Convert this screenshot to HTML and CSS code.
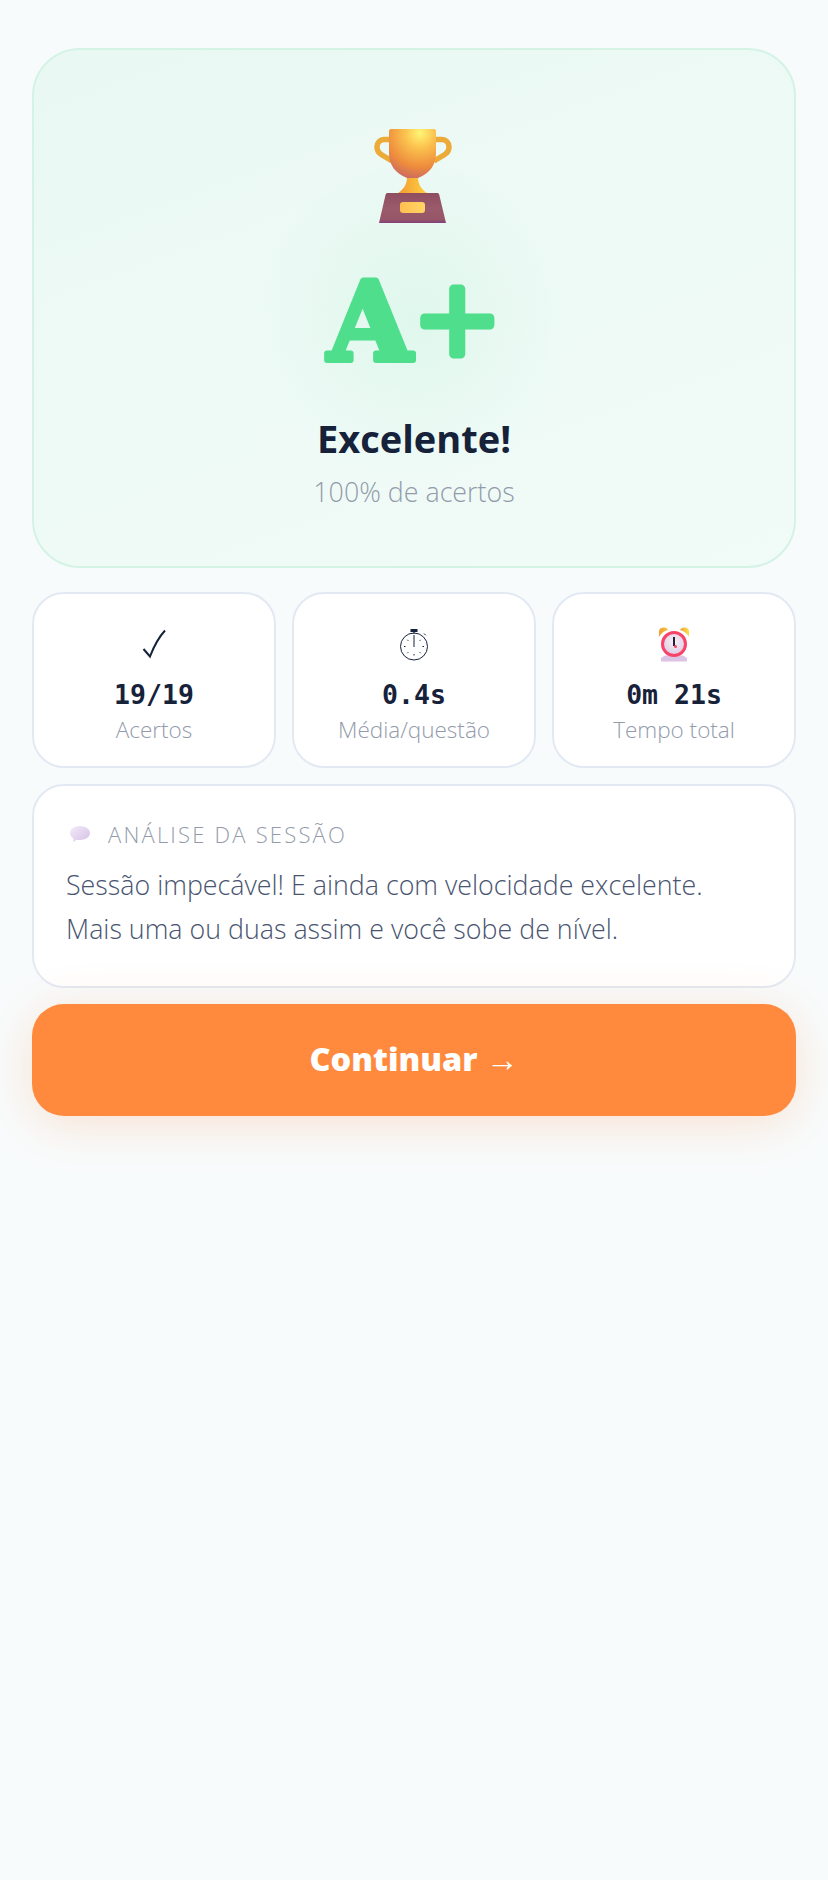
FILE: index.html
```html
<!DOCTYPE html>
<html lang="pt-BR">
<head>
<meta charset="utf-8">
<title>Resultado</title>
<link rel="stylesheet" href="styles.css">
</head>
<body>
<main class="page">
  <section class="hero">
    <svg class="trophy" viewBox="0 0 78 94" width="78" height="94" aria-hidden="true">
      <defs>
        <radialGradient id="cupG" gradientUnits="userSpaceOnUse" cx="46" cy="4" r="50">
          <stop offset="0" stop-color="#fff676"/>
          <stop offset="0.3" stop-color="#fbc24e"/>
          <stop offset="0.68" stop-color="#ee8c3c"/>
          <stop offset="1" stop-color="#c2626c"/>
        </radialGradient>
        <linearGradient id="stemG" x1="0" y1="0" x2="1" y2="0">
          <stop offset="0" stop-color="#f29a34"/>
          <stop offset="1" stop-color="#ffd040"/>
        </linearGradient>
        <linearGradient id="baseG" x1="0" y1="0" x2="0" y2="1">
          <stop offset="0" stop-color="#8e4e60"/>
          <stop offset="0.5" stop-color="#9b5a6c"/>
          <stop offset="0.88" stop-color="#965668"/>
          <stop offset="1" stop-color="#84407a"/>
        </linearGradient>
        <linearGradient id="plateG" x1="0" y1="0" x2="1" y2="0">
          <stop offset="0" stop-color="#ffc050"/>
          <stop offset="1" stop-color="#ffd465"/>
        </linearGradient>
      </defs>
      <path d="M16 10.500h-5.500C6 10.500 3 14 3 18c0 4 2.500 6.500 5 8l10 6M62 10.500h5.500C72 10.500 75 14 75 18c0 4-2.500 6.500-5 8l-10 6" fill="none" stroke="#ecaa38" stroke-width="5.500"/>
      <path d="M33 48h11c0 7 3 12 9 16H24c6-4 9-9 9-16z" fill="url(#stemG)"/>
      <path d="M15 2c0-1 .700-2 2-2h43c1.300 0 2 1 2 2v22c0 12-6 20-18 25H33C21 44 15 36 15 24z" fill="url(#cupG)"/>
      <path d="M14 64h49c1.200 0 2 .600 2.300 2L72 94H5l6.500-28c.300-1.400 1.300-2 2.500-2z" fill="url(#baseG)"/>
      <rect x="26" y="73" width="25" height="11" rx="3" fill="url(#plateG)"/>
    </svg>
    <svg class="grade" viewBox="0 0 300 190" width="300" height="190" role="img" aria-label="A+">
      <text class="grade-text" x="63" y="126"><tspan class="grade-a">A</tspan><tspan class="grade-plus" dx="6" dy="8">+</tspan></text>
    </svg>
    <h1 class="title">Excelente!</h1>
    <p class="subtitle">100% de acertos</p>
  </section>

  <section class="stats">
    <article class="stat">
      <div class="stat-icon">
        <svg viewBox="0 0 36 36" width="36" height="36" aria-hidden="true"><path d="M7.500 23l6.500 7.500C18 20 23 11 29 4.500" fill="none" stroke="#16213a" stroke-width="2"/></svg>
      </div>
      <div class="stat-value">19/19</div>
      <div class="stat-label">Acertos</div>
    </article>
    <article class="stat">
      <div class="stat-icon">
        <svg viewBox="0 0 36 36" width="36" height="36" aria-hidden="true">
          <circle cx="18" cy="20.500" r="13.500" fill="none" stroke="#16213a" stroke-width="1"/>
          <rect x="14.500" y="3" width="7" height="3" fill="#16213a"/>
          <path d="M18 6v2M18 9v12" stroke="#16213a" stroke-width="1"/>
          <path d="M18 28v1.500M8 20.500h1.500M26.500 20.500h1.500M11.300 13.800l1 1M23.700 26.200l1 1M24.700 13.800l-1 1M12.300 26.200l-1 1M28 7.500l1.800 1.800" stroke="#16213a" stroke-width="1"/>
        </svg>
      </div>
      <div class="stat-value">0.4s</div>
      <div class="stat-label">Média/questão</div>
    </article>
    <article class="stat">
      <div class="stat-icon">
        <svg viewBox="0 0 36 36" width="36" height="36" aria-hidden="true">
          <defs>
            <linearGradient id="bellL" x1="0" y1="0" x2="1" y2="0"><stop offset="0" stop-color="#eea030"/><stop offset="1" stop-color="#f7c040"/></linearGradient>
            <linearGradient id="bellR" x1="0" y1="0" x2="1" y2="0"><stop offset="0" stop-color="#eea030"/><stop offset="1" stop-color="#fbe04a"/></linearGradient>
            <radialGradient id="faceG" cx="0.5" cy="0.4" r="0.6"><stop offset="0" stop-color="#f6f0f6"/><stop offset="1" stop-color="#dccbe4"/></radialGradient>
          </defs>
          <path d="M3 11V5.500C3 3 5 1.500 8 1.500c2 0 4 1.500 4 2.500-4 1-7 3.500-9 7z" fill="url(#bellL)"/>
          <path d="M33 11V5.500C33 3 31 1.500 28 1.500c-2 0-4 1.500-4 2.500 4 1 7 3.500 9 7z" fill="url(#bellR)"/>
          <path d="M5 35.500v-3.500l4-2.500h18l4 2.500v3.500z" fill="#dcc4e4"/>
          <circle cx="18" cy="18" r="11.500" fill="url(#faceG)" stroke="#f84468" stroke-width="3"/>
          <path d="M17 11h2v9h-2z" fill="#27203a"/>
          <circle cx="19.500" cy="20.500" r="1.500" fill="#f84468"/>
        </svg>
      </div>
      <div class="stat-value">0m 21s</div>
      <div class="stat-label">Tempo total</div>
    </article>
  </section>

  <section class="analysis">
    <h2 class="analysis-head">
      <svg viewBox="0 0 22 18" width="22" height="18" aria-hidden="true">
        <defs><linearGradient id="bubbleG" x1="0" y1="0" x2="1" y2="1"><stop offset="0" stop-color="#f4ecf8"/><stop offset="1" stop-color="#d4bfe6"/></linearGradient></defs>
        <path d="M11 1c5.500 0 10 3 10 7s-4.500 7-10 7c-1 0-2 0-3-.300L4 17l.500-3.500C2.300 12.200 1 10.200 1 8c0-4 4.500-7 10-7z" fill="url(#bubbleG)"/>
      </svg>
      <span>ANÁLISE DA SESSÃO</span>
    </h2>
    <p class="analysis-text">Sessão impecável! E ainda com velocidade excelente.<br>Mais uma ou duas assim e você sobe de nível.</p>
  </section>

  <button class="continue" type="button">Continuar →</button>
</main>
</body>
</html>
```

FILE: styles.css
```css
* { box-sizing: border-box; }
html, body { margin: 0; padding: 0; }
body {
  background: #f8fbfc;
  font-family: "Open Sans", "Noto Sans", sans-serif;
  color: #16213a;
  min-height: 1880px;
}
.page {
  display: flex;
  flex-direction: column;
  padding: 48px 32px;
}
.hero {
  height: 520px;
  display: flex;
  flex-direction: column;
  align-items: center;
  border: 2px solid #d4f3e5;
  border-radius: 48px;
  background:
    radial-gradient(circle at 50% 52.500%, rgba(74, 222, 138, 0.09) 0, rgba(74, 222, 138, 0.05) 70px, rgba(74, 222, 138, 0) 160px),
    linear-gradient(160deg, #e9f8f3 0%, #eefaf6 50%, #f1fbf8 100%);
  padding-top: 79px;
  margin-bottom: 24px;
}
.trophy { display: block; flex: none; margin-left: -3px; }
.grade { display: block; flex: none; margin-top: 11px; margin-left: 2px; margin-bottom: -42px; }
.grade-text {
  font-size: 108px;
  fill: #4ede8c;
  stroke: #4ede8c;
  stroke-linejoin: round;
  stroke-linecap: round;
}
.grade-a { font-family: "DejaVu Serif", serif; font-weight: 700; stroke-width: 6px; }
.grade-plus { font-family: "Liberation Serif", serif; font-size: 140px; font-weight: 400; stroke-width: 9px; }
.title {
  margin: 32px 0 0;
  font-size: 38px;
  line-height: 48px;
  font-weight: 700;
  color: #16213a;
}
.subtitle {
  margin: 10px 0 0;
  font-size: 26.800px;
  line-height: 40px;
  font-weight: 300;
  color: #939baa;
}
.stats {
  display: grid;
  grid-template-columns: repeat(3, 1fr);
  gap: 16px;
  margin-bottom: 16px;
}
.stat {
  height: 176px;
  display: flex;
  flex-direction: column;
  align-items: center;
  background: #fff;
  border: 2px solid #e3e9f3;
  border-radius: 32px;
  padding-top: 32px;
}
.stat-icon { height: 36px; }
.stat-icon svg { display: block; }
.stat-value {
  margin-top: 15px;
  font-family: "DejaVu Sans Mono", monospace;
  font-weight: 700;
  font-size: 26.500px;
  line-height: 36px;
  color: #16213a;
}
.stat-label {
  margin-top: 1px;
  font-size: 22.500px;
  line-height: 32px;
  font-weight: 300;
  color: #939baa;
}
.analysis {
  height: 204px;
  background: #fff;
  border: 2px solid #e3e9f3;
  border-radius: 32px;
  padding: 33px 32px 0;
  margin-bottom: 16px;
}
.analysis-head {
  display: flex;
  align-items: center;
  gap: 17px;
  margin: 0 0 0 3px;
  font-size: 22px;
  line-height: 30px;
  font-weight: 300;
  letter-spacing: 2.200px;
  color: #939baa;
}
.analysis-text {
  margin: 14px 0 0;
  font-size: 26.800px;
  line-height: 44px;
  font-weight: 300;
  color: #485470;
}
.continue {
  height: 112px;
  width: 100%;
  border: 0;
  border-radius: 32px;
  background: #ff8a3d;
  color: #fff;
  font-family: inherit;
  font-size: 32.500px;
  font-weight: 800;
  padding-bottom: 4px;
  box-shadow: 0 8px 48px rgba(255, 138, 61, 0.22);
}
```
